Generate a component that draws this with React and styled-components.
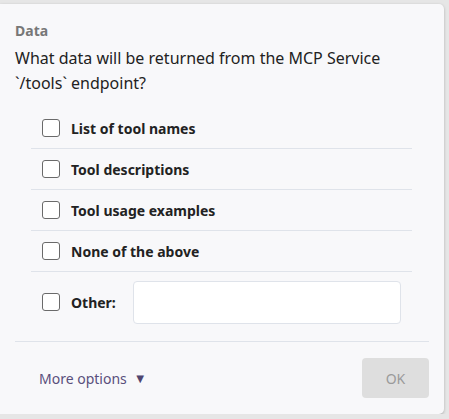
import React, { useState } from 'react';
import styled, { createGlobalStyle } from 'styled-components';

const GlobalStyle = createGlobalStyle`
  html, body {
    margin: 0;
    padding: 0;
    background: #e6e6e6;
  }
  body {
    font-family: "Noto Sans", "Open Sans", sans-serif;
  }
`;

const Card = styled.div`
  box-sizing: border-box;
  width: 444px;
  margin-top: 4px;
  padding: 17px 15px 16px 15px;
  background: #f8f8fa;
  border-radius: 0 5px 5px 0;
  box-shadow: 0 1px 3px rgba(0, 0, 0, 0.25);
`;

const Title = styled.div`
  font-size: 14px;
  font-weight: 700;
  line-height: 20px;
  color: #777777;
`;

const Question = styled.div`
  margin-top: 5px;
  font-size: 16px;
  line-height: 25px;
  color: #222222;
`;

const Options = styled.div`
  display: flex;
  flex-direction: column;
  margin: 12px 16px 0 16px;
  width: 381px;
`;

const Row = styled.label`
  display: flex;
  align-items: center;
  gap: 11px;
  height: ${(p) => (p.tall ? '60px' : '40px')};
  padding-left: 11px;
  border-bottom: ${(p) => (p.last ? 'none' : '1px solid #dfe3ea')};
  cursor: pointer;
`;

const Box = styled.span`
  box-sizing: border-box;
  width: 18px;
  height: 18px;
  flex: none;
  border: 1.5px solid #6a6a6a;
  border-radius: 3px;
  background: ${(p) => (p.checked ? '#6a6a6a' : '#ffffff')};
`;

const Label = styled.span`
  font-size: 14px;
  font-weight: 700;
  color: #222222;
  width: ${(p) => (p.short ? '51px' : 'auto')};
`;

const TextInput = styled.input`
  box-sizing: border-box;
  width: 268px;
  height: 43px;
  border: 1px solid #dfe3ea;
  border-radius: 4px;
  background: #ffffff;
  outline: none;
  font-family: inherit;
  font-size: 14px;
  padding: 0 10px;
`;

const Divider = styled.div`
  margin-top: 9px;
  height: 1px;
  background: #dfe3ea;
`;

const Footer = styled.div`
  display: flex;
  align-items: center;
  justify-content: space-between;
  margin-top: 16px;
  padding-left: 24px;
`;

const MoreOptions = styled.button`
  display: flex;
  align-items: center;
  gap: 7px;
  border: none;
  background: none;
  padding: 0;
  font-family: inherit;
  font-size: 14px;
  color: #5a4f7c;
  cursor: pointer;
`;

const Arrow = styled.span`
  font-size: 13px;
  color: #4f456f;
`;

const OkButton = styled.button`
  width: 67px;
  height: 40px;
  border: none;
  border-radius: 4px;
  background: #dedede;
  color: #9a9a9a;
  font-family: inherit;
  font-size: 14px;
`;

const choices = [
  'List of tool names',
  'Tool descriptions',
  'Tool usage examples',
  'None of the above',
];

const App = () => {
  const [checked, setChecked] = useState({});
  const toggle = (k) => setChecked((c) => ({ ...c, [k]: !c[k] }));

  return (
    <>
      <GlobalStyle />
      <Card>
        <Title>Data</Title>
        <Question>
          What data will be returned from the MCP Service
          <br />
          `/tools` endpoint?
        </Question>
        <Options>
          {choices.map((c) => (
            <Row key={c} onClick={() => toggle(c)}>
              <Box checked={checked[c]} />
              <Label>{c}</Label>
            </Row>
          ))}
          <Row tall last>
            <Box checked={checked.other} onClick={() => toggle('other')} />
            <Label short>Other:</Label>
            <TextInput type="text" />
          </Row>
        </Options>
        <Divider />
        <Footer>
          <MoreOptions>
            More options
            <Arrow>▼</Arrow>
          </MoreOptions>
          <OkButton disabled>OK</OkButton>
        </Footer>
      </Card>
    </>
  );
};

export default App;
